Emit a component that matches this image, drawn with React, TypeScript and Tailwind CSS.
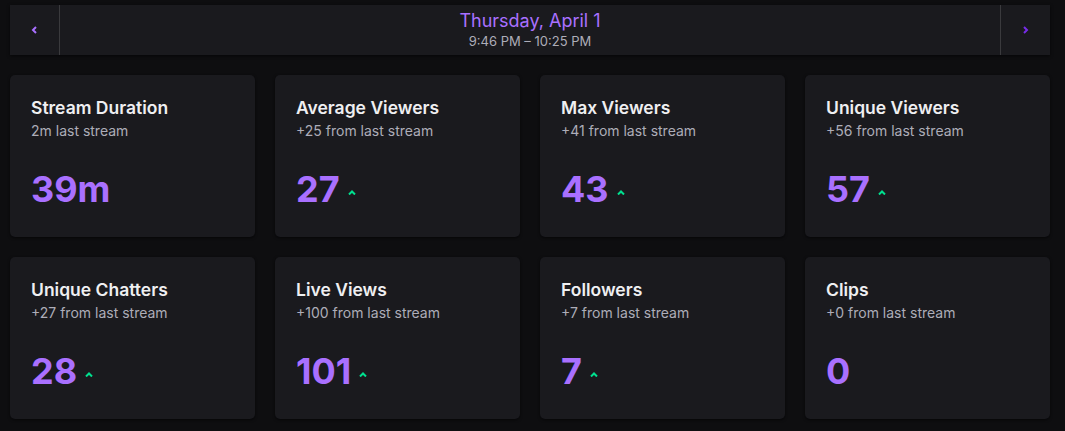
import React from 'react';

type Stat = { title: string; sub: string; value: string; up?: boolean };

const stats: Stat[] = [
  { title: 'Stream Duration', sub: '2m last stream', value: '39m' },
  { title: 'Average Viewers', sub: '+25 from last stream', value: '27', up: true },
  { title: 'Max Viewers', sub: '+41 from last stream', value: '43', up: true },
  { title: 'Unique Viewers', sub: '+56 from last stream', value: '57', up: true },
  { title: 'Unique Chatters', sub: '+27 from last stream', value: '28', up: true },
  { title: 'Live Views', sub: '+100 from last stream', value: '101', up: true },
  { title: 'Followers', sub: '+7 from last stream', value: '7', up: true },
  { title: 'Clips', sub: '+0 from last stream', value: '0' },
];

function Chevron({ dir, className }: { dir: 'left' | 'right'; className?: string }) {
  const d = dir === 'left' ? 'M5 1 L2 4 L5 7' : 'M2 1 L5 4 L2 7';
  return (
    <svg viewBox="0 0 8 8" className={className} fill="none" stroke="currentColor" strokeWidth={2}>
      <path d={d} />
    </svg>
  );
}

function Caret() {
  return (
    <svg viewBox="0 0 8 5" className="ml-[8px] mt-[7px] h-[5px] w-[8px] text-[#00e08f]" fill="none" stroke="currentColor" strokeWidth={2}>
      <path d="M1 4.5 L4 1.5 L7 4.5" />
    </svg>
  );
}

function StatCard({ stat }: { stat: Stat }) {
  return (
    <div className="h-[162px] rounded-[5px] bg-[#1a1a1e] px-[21px] pt-[21px] shadow-[0_1px_3px_rgba(0,0,0,0.6)]">
      <div className="text-[17.5px] leading-[24px] font-semibold text-[#efeff1]">{stat.title}</div>
      <div className="mt-[1px] text-[14px] leading-[20px] text-[#adadb8]">{stat.sub}</div>
      <div className="mt-[26px] flex items-center">
        <span className="text-[36px] leading-[44px] font-bold text-[#a970ff]">{stat.value}</span>
        {stat.up && <Caret />}
      </div>
    </div>
  );
}

export default function App() {
  return (
    <div className="min-h-[431px] bg-[#0e0e10] pl-[10px] pr-[15px] pt-[5px] font-['Inter',sans-serif]">
      {/* Date picker */}
      <div className="flex h-[50px] bg-[#1a1a1e] shadow-[0_1px_3px_rgba(0,0,0,0.6)]">
        <button className="flex w-[50px] items-center justify-center border-r border-[#3a3a3d]">
          <Chevron dir="left" className="h-[8px] w-[8px] text-[#a970ff]" />
        </button>
        <div className="flex flex-1 flex-col items-center justify-center">
          <div className="text-[18px] leading-[22px] text-[#a970ff]">Thursday, April 1</div>
          <div className="text-[13px] leading-[18px] text-[#adadb8]">9:46 PM – 10:25 PM</div>
        </div>
        <button className="flex w-[50px] items-center justify-center border-l border-[#3a3a3d]">
          <Chevron dir="right" className="h-[8px] w-[8px] text-[#772ce8]" />
        </button>
      </div>

      {/* Stats */}
      <div className="mt-[20px] grid grid-cols-4 gap-[20px]">
        {stats.map((s) => (
          <StatCard key={s.title} stat={s} />
        ))}
      </div>
    </div>
  );
}
